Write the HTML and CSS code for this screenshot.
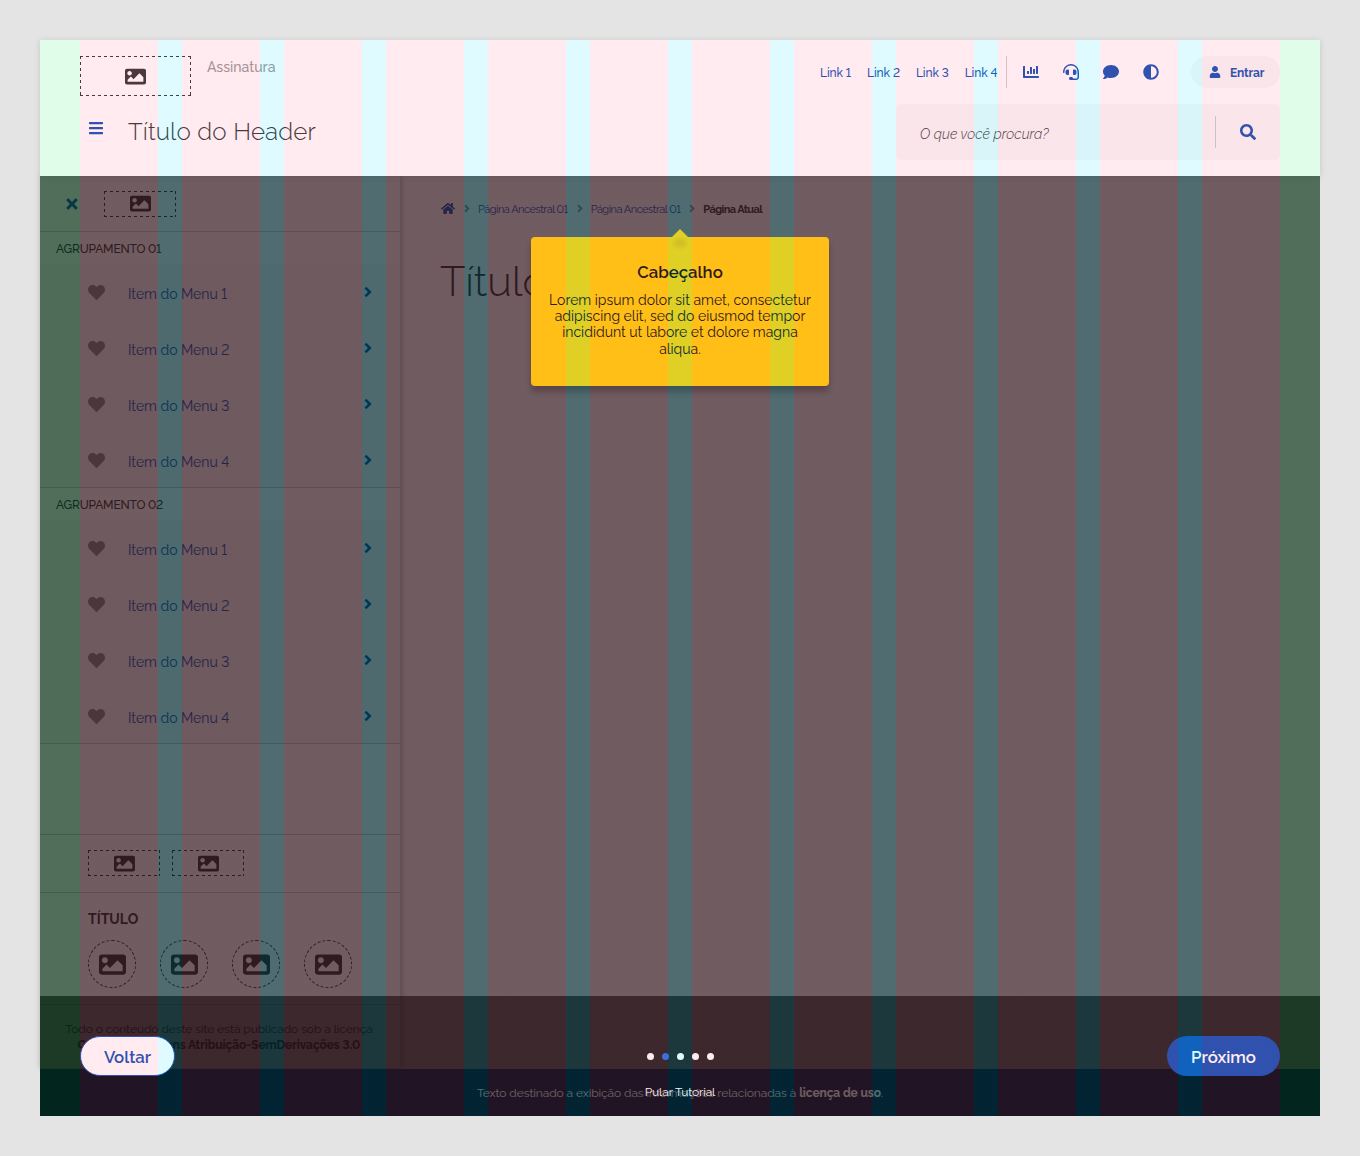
FILE: index.html
```html
<!DOCTYPE html>
<html lang="pt-BR">
<head>
<meta charset="utf-8">
<title>Tutorial - Cabeçalho</title>
<link rel="stylesheet" href="styles.css">
</head>
<body>
<svg class="sprite" aria-hidden="true">
  <symbol id="image" viewBox="0 0 512 512"><path d="M464 448H48c-26.51 0-48-21.49-48-48V112c0-26.51 21.49-48 48-48h416c26.51 0 48 21.49 48 48v288c0 26.51-21.49 48-48 48zM112 120c-30.928 0-56 25.072-56 56s25.072 56 56 56 56-25.072 56-56-25.072-56-56-56zM64 384h384V272l-87.515-87.515c-4.686-4.686-12.284-4.686-16.971 0L208 320l-55.515-55.515c-4.686-4.686-12.284-4.686-16.971 0L64 336v48z"/></symbol>
  <symbol id="bars" viewBox="0 0 448 512"><path d="M16 132h416c8.837 0 16-7.163 16-16V76c0-8.837-7.163-16-16-16H16C7.163 60 0 67.163 0 76v40c0 8.837 7.163 16 16 16zm0 160h416c8.837 0 16-7.163 16-16v-40c0-8.837-7.163-16-16-16H16c-8.837 0-16 7.163-16 16v40c0 8.837 7.163 16 16 16zm0 160h416c8.837 0 16-7.163 16-16v-40c0-8.837-7.163-16-16-16H16c-8.837 0-16 7.163-16 16v40c0 8.837 7.163 16 16 16z"/></symbol>
  <symbol id="chart" viewBox="0 0 512 512"><path d="M332.8 320h38.4c6.4 0 12.8-6.4 12.8-12.8V172.8c0-6.4-6.4-12.8-12.8-12.8h-38.4c-6.4 0-12.8 6.4-12.8 12.8v134.4c0 6.4 6.4 12.8 12.8 12.8zm96 0h38.4c6.4 0 12.8-6.4 12.8-12.8V76.8c0-6.4-6.4-12.8-12.8-12.8h-38.4c-6.4 0-12.8 6.4-12.8 12.8v230.4c0 6.4 6.4 12.8 12.8 12.8zm-288 0h38.4c6.4 0 12.8-6.4 12.8-12.8v-70.4c0-6.4-6.4-12.8-12.8-12.8h-38.4c-6.4 0-12.8 6.4-12.8 12.8v70.4c0 6.4 6.4 12.8 12.8 12.8zm96 0h38.4c6.4 0 12.8-6.4 12.8-12.8V108.8c0-6.4-6.4-12.8-12.8-12.8h-38.4c-6.4 0-12.8 6.4-12.8 12.8v198.4c0 6.4 6.4 12.8 12.8 12.8zM496 384H64V80c0-8.84-7.16-16-16-16H16C7.16 64 0 71.16 0 80v336c0 17.67 14.33 32 32 32h464c8.84 0 16-7.16 16-16v-32c0-8.84-7.16-16-16-16z"/></symbol>
  <symbol id="headset" viewBox="0 0 512 512"><path d="M192 208c0-17.67-14.33-32-32-32h-16c-35.35 0-64 28.65-64 64v48c0 35.35 28.65 64 64 64h16c17.67 0 32-14.33 32-32V208zm176 144c35.35 0 64-28.65 64-64v-48c0-35.35-28.65-64-64-64h-16c-17.67 0-32 14.33-32 32v112c0 17.67 14.33 32 32 32h16zM256 0C113.18 0 4.58 118.83 0 256v16c0 8.84 7.16 16 16 16h16c8.84 0 16-7.16 16-16v-16c0-114.69 93.31-208 208-208s208 93.31 208 208h-.12c.08 2.43.12 165.72.12 165.72 0 23.35-18.93 42.28-42.28 42.28H320c0-26.51-21.49-48-48-48h-32c-26.51 0-48 21.49-48 48s21.49 48 48 48h181.72c49.86 0 90.28-40.42 90.28-90.28V256C507.42 118.83 398.82 0 256 0z"/></symbol>
  <symbol id="comment" viewBox="0 0 512 512"><path d="M256 32C114.6 32 0 125.1 0 240c0 49.6 21.4 95 57 130.7C44.5 421.1 2.7 466 2.2 466.5c-2.2 2.3-2.8 5.7-1.5 8.7S4.8 480 8 480c66.3 0 116-31.8 140.6-51.4 32.7 12.3 69 19.4 107.4 19.4 141.4 0 256-93.1 256-208S397.4 32 256 32z"/></symbol>
  <symbol id="adjust" viewBox="0 0 512 512"><path d="M8 256c0 136.966 111.033 248 248 248s248-111.034 248-248S392.966 8 256 8 8 119.033 8 256zm248 184V72c101.705 0 184 82.311 184 184 0 101.705-82.311 184-184 184z"/></symbol>
  <symbol id="user" viewBox="0 0 448 512"><path d="M224 256c70.7 0 128-57.3 128-128S294.7 0 224 0 96 57.3 96 128s57.3 128 128 128zm89.6 32h-16.7c-22.2 10.2-46.9 16-72.9 16s-50.6-5.8-72.9-16h-16.7C60.2 288 0 348.2 0 422.4V464c0 26.5 21.5 48 48 48h352c26.5 0 48-21.5 48-48v-41.6c0-74.2-60.2-134.4-134.4-134.4z"/></symbol>
  <symbol id="search" viewBox="0 0 512 512"><path d="M505 442.7L405.3 343c-4.5-4.5-10.6-7-17-7H372c27.6-35.3 44-79.7 44-128C416 93.1 322.9 0 208 0S0 93.1 0 208s93.1 208 208 208c48.3 0 92.7-16.4 128-44v16.3c0 6.4 2.5 12.5 7 17l99.7 99.7c9.4 9.4 24.6 9.4 33.9 0l28.3-28.3c9.4-9.4 9.4-24.6.1-34zM208 336c-70.7 0-128-57.2-128-128 0-70.7 57.2-128 128-128 70.7 0 128 57.2 128 128 0 70.7-57.2 128-128 128z"/></symbol>
  <symbol id="times" viewBox="0 0 352 512"><path d="M242.72 256l100.07-100.07c12.28-12.28 12.28-32.19 0-44.48l-22.24-22.24c-12.28-12.28-32.19-12.28-44.48 0L176 189.28 75.93 89.21c-12.28-12.28-32.19-12.28-44.48 0L9.21 111.45c-12.28 12.28-12.28 32.19 0 44.48L109.28 256 9.21 356.07c-12.28 12.28-12.28 32.19 0 44.48l22.24 22.24c12.28 12.28 32.2 12.28 44.48 0L176 322.72l100.07 100.07c12.28 12.28 32.2 12.28 44.48 0l22.24-22.24c12.28-12.28 12.28-32.19 0-44.48L242.72 256z"/></symbol>
  <symbol id="heart" viewBox="0 0 512 512"><path d="M462.3 62.6C407.5 15.9 326 24.3 275.7 76.2L256 96.5l-19.7-20.3C186.1 24.3 104.5 15.9 49.7 62.6c-62.8 53.6-66.1 149.8-9.9 207.9l193.5 199.8c12.5 12.9 32.8 12.9 45.3 0l193.5-199.8c56.3-58.1 53-154.3-9.8-207.9z"/></symbol>
  <symbol id="chevron" viewBox="0 0 8 12"><path d="M1.4 1.6 5.8 6 1.4 10.4" fill="none" stroke="currentColor" stroke-width="2.6"/></symbol>
  <symbol id="home" viewBox="0 0 576 512"><path d="M280.37 148.26L96 300.11V464a16 16 0 0 0 16 16l112.06-.29a16 16 0 0 0 15.92-16V368a16 16 0 0 1 16-16h64a16 16 0 0 1 16 16v95.64a16 16 0 0 0 16 16.05L464 480a16 16 0 0 0 16-16V300L295.67 148.26a12.19 12.19 0 0 0-15.3 0zM571.6 251.47L488 182.56V44.05a12 12 0 0 0-12-12h-56a12 12 0 0 0-12 12v72.61L318.47 43a48 48 0 0 0-61 0L4.34 251.47a12 12 0 0 0-1.6 16.9l25.5 31A12 12 0 0 0 45.15 301l235.22-193.74a12.19 12.19 0 0 1 15.3 0L530.9 301a12 12 0 0 0 16.9-1.6l25.5-31a12 12 0 0 0-1.7-16.93z"/></symbol>
</svg>

<div class="frame">
  <header class="header">
    <div class="header-top">
      <div class="logo logo-header"><svg class="icon i20"><use href="#image"/></svg></div>
      <span class="signature">Assinatura</span>
      <nav class="links"><a>Link 1</a><a>Link 2</a><a>Link 3</a><a>Link 4</a></nav>
      <div class="tools">
        <svg class="icon i16"><use href="#chart"/></svg>
        <svg class="icon i16"><use href="#headset"/></svg>
        <svg class="icon i16"><use href="#comment"/></svg>
        <svg class="icon i16"><use href="#adjust"/></svg>
      </div>
      <button class="sign-in"><svg class="icon i12"><use href="#user"/></svg><span>Entrar</span></button>
    </div>
    <div class="header-bottom">
      <svg class="icon i16 burger"><use href="#bars"/></svg>
      <h2 class="header-title">Título do Header</h2>
      <div class="search"><span class="search-text">O que você procura?</span><span class="search-button"><svg class="icon i16"><use href="#search"/></svg></span></div>
    </div>
  </header>

  <div class="body">
    <aside class="menu">
      <div class="menu-head"><svg class="icon i16 close"><use href="#times"/></svg><div class="logo logo-small"><svg class="icon i20"><use href="#image"/></svg></div></div>
      <section class="group">
        <h3 class="group-title">AGRUPAMENTO 01</h3>
        <a class="item"><svg class="icon heart"><use href="#heart"/></svg><span>Item do Menu 1</span><svg class="icon go"><use href="#chevron"/></svg></a>
        <a class="item"><svg class="icon heart"><use href="#heart"/></svg><span>Item do Menu 2</span><svg class="icon go"><use href="#chevron"/></svg></a>
        <a class="item"><svg class="icon heart"><use href="#heart"/></svg><span>Item do Menu 3</span><svg class="icon go"><use href="#chevron"/></svg></a>
        <a class="item"><svg class="icon heart"><use href="#heart"/></svg><span>Item do Menu 4</span><svg class="icon go"><use href="#chevron"/></svg></a>
      </section>
      <section class="group">
        <h3 class="group-title">AGRUPAMENTO 02</h3>
        <a class="item"><svg class="icon heart"><use href="#heart"/></svg><span>Item do Menu 1</span><svg class="icon go"><use href="#chevron"/></svg></a>
        <a class="item"><svg class="icon heart"><use href="#heart"/></svg><span>Item do Menu 2</span><svg class="icon go"><use href="#chevron"/></svg></a>
        <a class="item"><svg class="icon heart"><use href="#heart"/></svg><span>Item do Menu 3</span><svg class="icon go"><use href="#chevron"/></svg></a>
        <a class="item"><svg class="icon heart"><use href="#heart"/></svg><span>Item do Menu 4</span><svg class="icon go"><use href="#chevron"/></svg></a>
      </section>
      <div class="menu-logos">
        <div class="logo logo-small"><svg class="icon i20"><use href="#image"/></svg></div>
        <div class="logo logo-small"><svg class="icon i20"><use href="#image"/></svg></div>
      </div>
      <div class="social">
        <h4 class="social-title">TÍTULO</h4>
        <div class="social-list">
          <div class="round"><svg class="icon i26"><use href="#image"/></svg></div>
          <div class="round"><svg class="icon i26"><use href="#image"/></svg></div>
          <div class="round"><svg class="icon i26"><use href="#image"/></svg></div>
          <div class="round"><svg class="icon i26"><use href="#image"/></svg></div>
        </div>
      </div>
      <p class="license"><span class="license-line">Todo o conteúdo deste site está publicado sob a licença</span><strong class="license-name">Creative Commons Atribuição-SemDerivações 3.0</strong></p>
    </aside>
    <main class="content">
      <nav class="crumbs">
        <svg class="icon home"><use href="#home"/></svg>
        <svg class="icon sep"><use href="#chevron"/></svg><a>Página Ancestral 01</a>
        <svg class="icon sep"><use href="#chevron"/></svg><a>Página Ancestral 01</a>
        <svg class="icon sep"><use href="#chevron"/></svg><b>Página Atual</b>
      </nav>
      <h1 class="page-title">Título</h1>
    </main>
    <div class="band"></div>
  </div>
  <footer class="footer"><span>Texto destinado a exibição das informações relacionadas à <strong>licença de uso</strong>.</span></footer>

  <div class="scrim"></div>

  <div class="popover">
    <h3 class="popover-title">Cabeçalho</h3>
    <p class="popover-text"><span>Lorem ipsum dolor sit amet, consectetur</span><span>adipiscing elit, sed do eiusmod tempor</span><span>incididunt ut labore et dolore magna</span><span>aliqua.</span></p>
  </div>

  <div class="tour">
    <button class="button back">Voltar</button>
    <div class="steps">
      <div class="dots"><i></i><i class="on"></i><i></i><i></i><i></i></div>
      <a class="skip">Pular Tutorial</a>
    </div>
    <button class="button next">Próximo</button>
  </div>

  <div class="columns"></div>
</div>
</body>
</html>
```
FILE: styles.css
```css
* { box-sizing: border-box; }
body {
  margin: 0;
  padding: 40px;
  background: #e4e4e4;
  color: #333;
  font-family: Raleway, Lato, "Open Sans", sans-serif;
  font-size: 14px;
  font-variant-numeric: lining-nums;
}
h1, h2, h3, h4, p { margin: 0; }
button { font-family: inherit; border: 0; padding: 0; }
.sprite { position: absolute; width: 0; height: 0; }
.icon { display: block; flex: none; fill: currentColor; }
.i12 { width: 12px; height: 12px; }
.i16 { width: 16px; height: 16px; }
.i20 { width: 21px; height: 21px; }
.i26 { width: 27px; height: 27px; }

.frame {
  position: relative;
  display: grid;
  grid-template-rows: 136px 892px 48px;
  width: 1280px;
  height: 1076px;
  background: #fff;
}

/* Header */
.header {
  position: relative;
  z-index: 2;
  padding: 16px 40px;
  background: #fff;
  box-shadow: 0 1px 6px rgba(51, 51, 51, .16);
}
.header-top { display: flex; height: 48px; align-items: flex-start; }
.logo {
  display: flex;
  align-items: center;
  justify-content: center;
  background:
    repeating-linear-gradient(90deg, #333 0 3px, transparent 3px 6px) 0 0 / 100% 1px no-repeat,
    repeating-linear-gradient(90deg, #333 0 3px, transparent 3px 6px) 0 100% / 100% 1px no-repeat,
    repeating-linear-gradient(#333 0 3px, transparent 3px 6px) 0 0 / 1px 100% no-repeat,
    repeating-linear-gradient(#333 0 3px, transparent 3px 6px) 100% 0 / 1px 100% no-repeat;
}
.logo-header { width: 111px; height: 40px; }
.logo-small { width: 72px; height: 26px; }
.signature { width: 613px; padding-left: 16px; line-height: 23px; font-weight: 500; color: #999; }
.links { display: flex; gap: 16px; width: 203px; height: 32px; padding: 1px 0 0 16px; align-items: center; border-right: 1px solid #ccc; color: #1351b4; font-size: 12px; font-weight: 500; letter-spacing: -.1px; white-space: nowrap; }
.tools { display: flex; gap: 24px; height: 32px; align-items: center; padding-left: 16px; color: #1351b4; }
.sign-in { display: flex; align-items: center; gap: 9px; width: 89px; height: 32px; margin-left: auto; padding-left: 18px; border-radius: 16px; background: #f8f8f8; color: #1351b4; font-size: 12px; font-weight: 700; letter-spacing: -.15px; }
.sign-in span { padding-top: 1px; }
.header-bottom { display: flex; height: 56px; align-items: center; }
.burger { margin: 0 24px 8px 8px; color: #1351b4; }
.header-title { margin-top: -1px; font-size: 24.2px; font-weight: 300; letter-spacing: .14px; }
.search { display: flex; align-items: center; width: 384px; height: 56px; margin-left: auto; padding-left: 24px; border-radius: 6px; background: #f8f8f8; }
.search-text { flex: 1; padding-top: 4px; font-style: italic; font-weight: 300; letter-spacing: .05px; }
.search-button { display: flex; align-items: center; justify-content: center; width: 65px; height: 32px; border-left: 1px solid #ccc; color: #1351b4; }

/* Side menu and page */
.body { position: relative; display: flex; }
.menu { display: flex; flex-direction: column; width: 360px; box-shadow: 1px 0 6px rgba(0, 0, 0, .3); }
.menu-head { display: flex; align-items: center; gap: 24px; height: 56px; padding-left: 24px; border-bottom: 1px solid #ccc; }
.close { color: #1351b4; }
.group { border-bottom: 1px solid #ccc; height: 256px; }
.group-title { height: 32px; padding: 0 16px; line-height: 34px; font-size: 12px; font-weight: 500; letter-spacing: -.2px; }
.item { display: flex; align-items: center; height: 56px; padding: 0 28px 0 48px; background: #f8f8f8; color: #888; }
.group .item:last-child { height: 55px; padding-top: 1px; }
.item span { flex: 1; padding: 3px 0 0 23px; color: #1351b4; font-weight: 400; letter-spacing: -.03px; }
.heart { width: 17px; height: 17px; }
.item .go { width: 8px; height: 12px; color: #1351b4; }
.menu-logos { display: flex; gap: 12px; height: 59px; margin-top: 90px; padding: 15px 48px; border-top: 1px solid #ccc; border-bottom: 1px solid #ccc; }
.social { height: 112px; padding: 15px 48px 0; border-bottom: 1px solid #ccc; }
.social-title { font-size: 14px; line-height: 22px; }
.social-list { display: flex; gap: 24px; padding-top: 10px; }
.round { display: flex; align-items: center; justify-content: center; width: 48px; height: 48px; border: 1px dashed #333; border-radius: 50%; }
.license { display: flex; flex-direction: column; align-items: center; padding: 16px 2px 0 0; font-size: 12px; line-height: 16px; letter-spacing: -.08px; white-space: nowrap; }
.license-line { font-weight: 400; }
.content { padding: 24px 40px; }
.crumbs { display: flex; align-items: center; height: 16px; padding-left: 1px; font-size: 11px; letter-spacing: -.52px; white-space: nowrap; color: #1351b4; }
.crumbs a, .crumbs b { padding-top: 2px; }
.crumbs b { color: #333; letter-spacing: -.6px; }
.home { width: 14px; height: 13px; margin-right: 9px; }
.sep { width: 6px; height: 11px; margin: 0 8px 0 9px; color: #999; }
.home + .sep { margin-left: 0; }
.page-title { margin-top: 41px; font-size: 41.8px; line-height: 50px; font-weight: 300; }
.band { position: absolute; inset: auto 0 -1px; height: 73px; background: rgba(0, 0, 0, .645); }
.footer { position: relative; display: flex; align-items: center; justify-content: center; margin-top: 1px; background: #071d41; color: #fff; font-size: 12px; letter-spacing: -.09px; white-space: nowrap; }

/* Tutorial layer */
.scrim { position: absolute; inset: 136px 0 0; background: rgba(0, 0, 0, .64); }
.popover { position: absolute; left: 491px; top: 197px; width: 298px; height: 149px; padding-top: 24px; border-radius: 4px; background: #ffcd07; color: #111; text-align: center; box-shadow: 0 6px 6px rgba(0, 0, 0, .28); }
.popover::before { content: ""; position: absolute; left: 141px; top: -8px; border: solid transparent; border-width: 0 8px 8px; border-bottom-color: #ffcd07; }
.popover::after { content: ""; position: absolute; left: 145px; top: 4px; width: 8px; height: 4px; border-radius: 50%; background: rgba(0, 0, 0, .07); box-shadow: 0 0 4px 2px rgba(0, 0, 0, .1); }
.popover-title { font-size: 16.8px; line-height: 22px; font-weight: 600; }
.popover-text { display: flex; flex-direction: column; padding-top: 9px; line-height: 16.2px; white-space: nowrap; }
.tour { position: absolute; inset: 996px 40px 0; display: flex; justify-content: space-between; align-items: flex-start; }
.button { height: 40px; padding-top: 2px; border-radius: 20px; font-size: 16.8px; font-weight: 600; }
.back { width: 95px; border: 1px solid #1351b4; background: #fff; color: #1351b4; }
.next { width: 113px; background: #1351b4; color: #fff; }
.steps { display: flex; flex-direction: column; align-items: center; gap: 24px; padding: 17px 0 0 18px; }
.dots { display: flex; gap: 8px; }
.dots i { width: 7px; height: 7px; border-radius: 50%; background: #fff; }
.dots .on { background: #2670e8; }
.skip { color: #fff; font-size: 12px; line-height: 16px; letter-spacing: -.12px; white-space: nowrap; }

/* Layout grid: margins, twelve columns and their gutters */
.columns {
  position: absolute;
  inset: 0;
  z-index: 5;
  pointer-events: none;
  background:
    linear-gradient(rgba(0, 238, 80, .12) 0 0) 0 0 / 40px 100% no-repeat,
    linear-gradient(rgba(0, 238, 80, .12) 0 0) 100% 0 / 40px 100% no-repeat,
    repeating-linear-gradient(90deg, rgba(255, 90, 130, .12) 0 78px, rgba(0, 221, 255, .12) 78px 102px) 40px 0 / 1200px 100% no-repeat;
}
```
